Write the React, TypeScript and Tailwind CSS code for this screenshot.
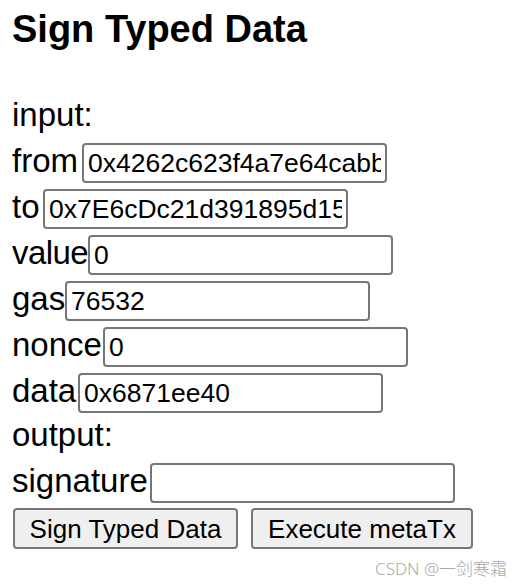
import React from "react";

const rows: { label: string; w: string; value: string; extra?: string }[] = [
  { label: "from", w: "w-[70px]", value: "0x4262c623f4a7e64cabb4Bd0C0B5B4E1C8a6F5A6B" },
  { label: "to", w: "w-[31px]", value: "0x7E6cDc21d391895d15a3C2D3e4f5a6b7c8d9e0F1" },
  { label: "value", w: "w-[76px]", value: "0", extra: "tracking-[-0.6px]" },
  { label: "gas", w: "w-[53px]", value: "76532" },
  { label: "nonce", w: "w-[91px]", value: "0" },
  { label: "data", w: "w-[66px]", value: "0x6871ee40" },
];

function Field({ label, w, value, extra }: { label: string; w: string; value: string; extra?: string }) {
  return (
    <div className="h-[46px] pt-[3px] flex items-baseline">
      <span className={`${w} ${extra ?? ""} shrink-0 whitespace-nowrap text-[33px] leading-[32px]`}>{label}</span>
      <input
        readOnly
        defaultValue={value}
        className="w-[305px] h-[40px] shrink-0 border-2 border-[#767676] rounded-[4px] px-[4px] py-0 text-[26.5px] text-black bg-white outline-none font-['Liberation_Sans',Arial,sans-serif]"
      />
    </div>
  );
}

export default function App() {
  return (
    <div className="relative w-[526px] h-[588px] bg-white text-black font-['Liberation_Sans',Arial,sans-serif] pl-[12px] overflow-hidden">
      <h3 className="h-[96px] pt-[11px] text-[38px] leading-[37.5px] font-bold">Sign Typed Data</h3>
      <div className="h-[44px] pt-[3px] text-[33px] leading-[32px]">input:</div>
      {rows.map((r) => (
        <Field key={r.label} {...r} />
      ))}
      <div className="h-[44px] pt-[3px] text-[33px] leading-[32px]">output:</div>
      <Field label="signature" w="w-[138px]" value="" />
      <div className="mt-[2px] ml-[1px] flex gap-[13px]">
        <button className="w-[225px] h-[41px] border-2 border-[#767676] rounded-[4px] bg-[#efefef] text-[26px] text-black">
          Sign Typed Data
        </button>
        <button className="w-[222px] h-[41px] border-2 border-[#767676] rounded-[4px] bg-[#efefef] text-[26px] text-black">
          Execute metaTx
        </button>
      </div>
      <div className="absolute right-[19px] bottom-[9px] text-[17px] leading-[20px] font-light text-[#a9a9a9] font-['Noto_Sans','Noto_Sans_CJK_SC',sans-serif]">
        CSDN @一剑寒霜
      </div>
    </div>
  );
}
